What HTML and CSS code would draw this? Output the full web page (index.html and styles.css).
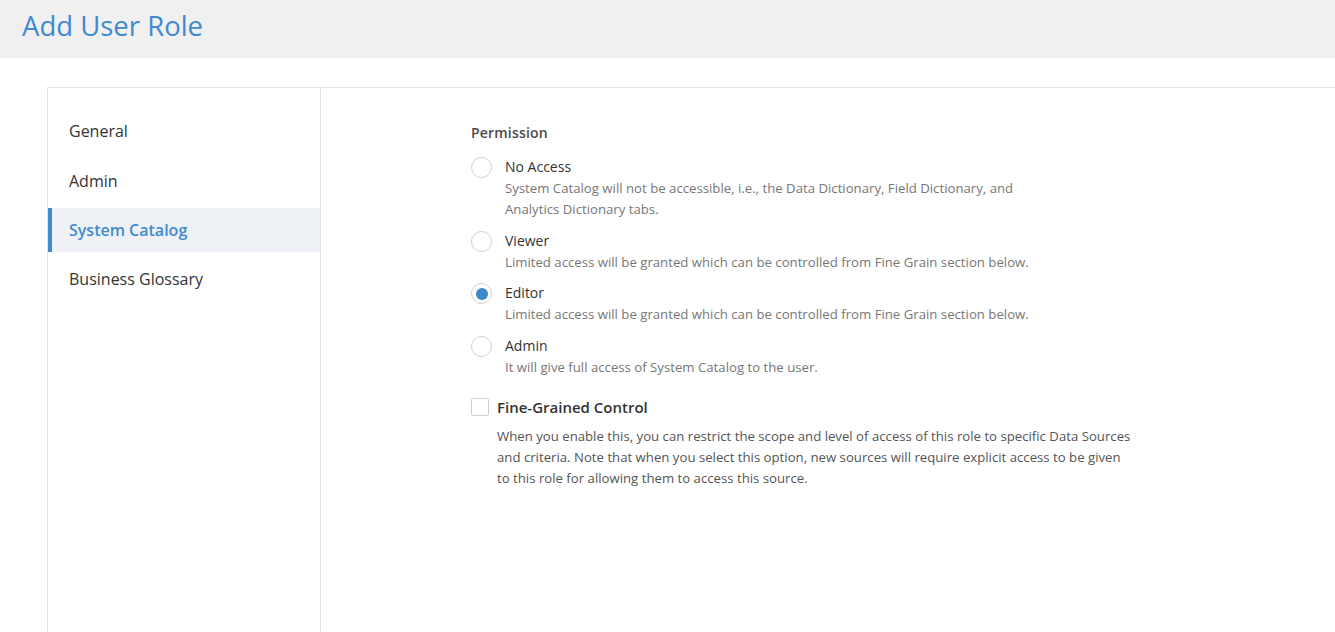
FILE: index.html
```html
<!DOCTYPE html><html lang="en">
<head>
  <meta charset="UTF-8">
  <meta name="viewport" content="width=device-width, initial-scale=1.0">
  <title>Add User Role</title>
  <link rel="stylesheet" href="styles.css">
</head>
<body>
  <div class="page-head">
    <h1>Add User Role</h1>
  </div>

  <div class="card">
    <!-- left tabs -->
    <ul class="tabs">
      <li>General</li>
      <li>Admin</li>
      <li class="active">System Catalog</li>
      <li>Business Glossary</li>
    </ul>

    <!-- permission form -->
    <div class="panel">
      <div class="field-title">Permission</div>

      <label class="option">
        <span class="radio"></span>
        <span class="option-text">
          <span class="option-name">No Access</span>
          <span class="option-desc">System Catalog will not be accessible, i.e., the Data Dictionary, Field Dictionary, and Analytics Dictionary tabs.</span>
        </span>
      </label>
      <label class="option">
        <span class="radio"></span>
        <span class="option-text">
          <span class="option-name">Viewer</span>
          <span class="option-desc">Limited access will be granted which can be controlled from Fine Grain section below.</span>
        </span>
      </label>
      <label class="option">
        <span class="radio checked"></span>
        <span class="option-text">
          <span class="option-name">Editor</span>
          <span class="option-desc">Limited access will be granted which can be controlled from Fine Grain section below.</span>
        </span>
      </label>
      <label class="option">
        <span class="radio"></span>
        <span class="option-text">
          <span class="option-name">Admin</span>
          <span class="option-desc">It will give full access of System Catalog to the user.</span>
        </span>
      </label>

      <label class="fine">
        <span class="checkbox"></span>
        <span class="fine-text">
          <span class="fine-name">Fine-Grained Control</span>
          <span class="fine-desc">When you enable this, you can restrict the scope and level of access of this role to specific Data Sources and criteria. Note that when you select this option, new sources will require explicit access to be given to this role for allowing them to access this source.</span>
        </span>
      </label>
    </div>
  </div>
</body>
</html>
```

FILE: styles.css
```css
body { margin:0; font-family:"Open Sans", sans-serif; background:#fff; color:#333; overflow:hidden; }
.page-head { background:#f0f0f0; height:58px; padding:6px 22px 0; box-sizing:border-box; }
.page-head h1 { margin:0; font-size:27.5px; line-height:40px; font-weight:400; color:#3f8ad0; }

.card { margin:29px 0 0 47px; border:1px solid #e3e3e3; border-right:none; display:flex; height:560px; }
.tabs { list-style:none; margin:0; padding:21px 0 0; width:272px; border-right:1px solid #e3e3e3; }
.tabs li { height:44px; line-height:44px; padding-left:17px; margin-bottom:5.6px; font-size:16px; color:#333; border-left:4px solid transparent; }
.tabs li.active { background:#eef2f6; border-left-color:#3f8ad0; color:#3f8ad0; font-weight:600; margin-top:1px; margin-bottom:4.6px; }

.panel { padding:35px 0 0 150px; }
.field-title { font-size:14px; font-weight:600; color:#4a4a4a; margin-bottom:14px; letter-spacing:0.2px; }

.option { display:flex; margin-bottom:9.5px; }
.radio { width:21px; height:21px; border:1px solid #d0d0d0; border-radius:50%; box-sizing:border-box; margin-top:1px; margin-right:13px; flex-shrink:0; display:flex; align-items:center; justify-content:center; background:#fff; }
.radio.checked::after { content:""; width:12px; height:12px; border-radius:50%; background:#3f87cc; }
.option-text { display:flex; flex-direction:column; }
.option-name { font-size:14px; line-height:22px; color:#333; }
.option-desc { font-size:13.2px; line-height:21px; color:#777; max-width:550px; }

.fine { display:flex; margin-top:17px; }
.checkbox { width:18px; height:18px; border:1px solid #cfcfcf; border-radius:2px; box-sizing:border-box; margin-top:3px; margin-right:8px; flex-shrink:0; background:#fff; }
.fine-text { display:flex; flex-direction:column; }
.fine-name { font-size:15px; font-weight:600; line-height:24px; color:#333; margin-bottom:7px; }
.fine-desc { font-size:13.2px; line-height:21px; color:#555; max-width:637px; }
```
